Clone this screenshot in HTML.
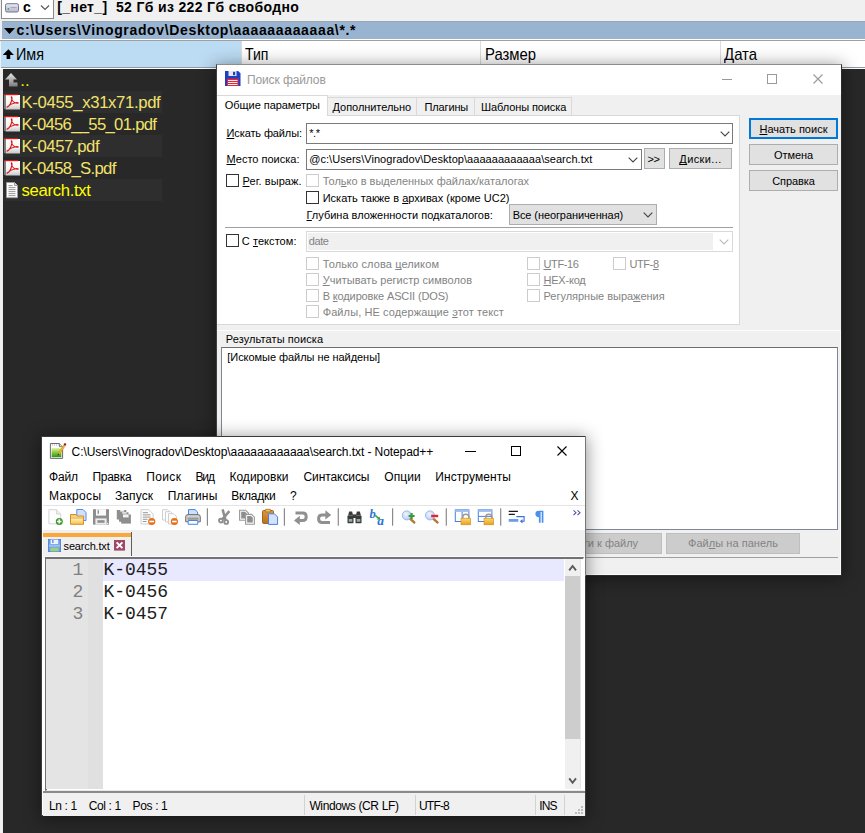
<!DOCTYPE html>
<html><head><meta charset="utf-8">
<style>
*{box-sizing:border-box;margin:0;padding:0}
html,body{width:865px;height:833px;overflow:hidden;background:#282828;font-family:"Liberation Sans","DejaVu Sans",sans-serif;}
.a{position:absolute;white-space:nowrap}
u{text-decoration:underline;text-underline-offset:1px;text-decoration-skip-ink:none}
/* Total Commander */
#tc-top{left:0;top:0;width:865px;height:69px;background:#f0f0f0}
#tc-path{left:1.5px;top:21px;width:864px;height:18px;background:#99b4d1;border-top:1px solid #9aa6b4}
#tc-head{left:0;top:39px;width:865px;height:30px;background:#fff;border-top:1px solid #fff}
.hd{top:41px;height:26px;background:#fff;font-size:17px;line-height:26px;color:#000;transform-origin:0 0}
.f{left:21px;font-size:16.7px;line-height:24px;color:#f2e26c;height:22px}
.row{left:3px;width:159px;height:22px;background:#2e2e2e}
/* dialog */
#dlg{left:216px;top:64px;width:626px;height:512px;background:#f0f0f0;border:1px solid #2c2c2c;border-top-color:#8c8c8c;border-left-color:#404040;box-shadow:0 2px 16px 1px rgba(0,0,0,.42)}
.t{font-size:11px;line-height:13px;color:#000}
.g{color:#838383}
.cb{width:13px;height:13px;border:1px solid #333;background:#fff}
.cb.d{border-color:#cccccc}
.btn{background:#e1e1e1;border:1px solid #adadad;font-size:11px;line-height:18px;text-align:center;color:#000}
.combo{background:#fff;border:1px solid #7a7a7a;height:21px}
/* npp */
#npp{left:41px;top:436px;width:545px;height:380px;background:#fff;border:1px solid #3a3a3a;box-shadow:0 2px 16px 1px rgba(0,0,0,.42)}
.m{font-size:12px;line-height:16px;color:#000}
.mono{font-family:"Liberation Mono","DejaVu Sans Mono",monospace;font-size:18px;line-height:22px;color:#1c1c1c}
.st{font-size:12px;line-height:16px;color:#000;top:798px}
</style></head><body>

<!-- ===== Total Commander background ===== -->
<div class="a" id="tc-top"></div>
<div class="a" style="left:1px;top:0;width:53px;height:19px;background:#fff;border:1px solid #8a8a8a;border-top:none"></div>
<svg class="a" style="left:5px;top:2.6px" width="14" height="10"><defs><linearGradient id="dg" x1="0" y1="0" x2="0" y2="1"><stop offset="0" stop-color="#e8e8f2"/><stop offset="1" stop-color="#b8b8cc"/></linearGradient></defs><rect x="0.5" y="0.7" width="13" height="8.3" rx="1.6" fill="url(#dg)" stroke="#74749a"/><rect x="2.6" y="5.2" width="1.5" height="1.5" fill="#18b030"/><path d="M5.4 4.6 H11.6" stroke="#9898b0" stroke-width="0.8"/></svg>
<div class="a" style="left:23px;top:-1px;font-size:14px;font-weight:bold;line-height:17px;color:#000">c</div>
<svg class="a" style="left:40px;top:4px" width="10" height="8"><path d="M1 1.5 L5 5.5 L9 1.5" fill="none" stroke="#555" stroke-width="1.1"/></svg>
<div class="a" style="left:57.2px;top:-1px;font-size:14px;font-weight:bold;line-height:17px;color:#000;letter-spacing:0.35px">[_нет_]&nbsp; 52 Гб из 222 Гб свободно</div>

<div class="a" id="tc-path"></div>
<svg class="a" style="left:4px;top:27px" width="12" height="8"><path d="M0 1 H11 L5.5 7 Z" fill="#000"/></svg>
<div class="a" style="left:16.5px;top:21px;font-size:14px;font-weight:bold;line-height:19px;color:#000;letter-spacing:0.65px">c:\Users\Vinogradov\Desktop\aaaaaaaaaaaa\*.*</div>

<div class="a" id="tc-head"></div>
<div class="a" style="left:0;top:40px;width:865px;height:1px;background:#a0a0a0"></div>
<div class="a" style="left:0;top:67px;width:865px;height:1px;background:#8f9aa5"></div>
<div class="a" style="left:0;top:41px;width:1px;height:27px;background:#f0f0f0"></div>
<div class="a hd" style="left:1px;width:239.5px;background:#bcdcf4"></div>
<div class="a hd" style="left:241px;width:239px"></div>
<div class="a hd" style="left:481px;width:239px"></div>
<div class="a hd" style="left:721px;width:144px"></div>
<div class="a" style="left:240.5px;top:41px;width:1px;height:26px;background:#dcdcdc"></div>
<div class="a" style="left:480px;top:41px;width:1px;height:26px;background:#dcdcdc"></div>
<div class="a" style="left:720px;top:41px;width:1px;height:26px;background:#dcdcdc"></div>
<svg class="a" style="left:3px;top:48px" width="12" height="12"><path d="M5.4 1.2 L10.9 6.9 H7.2 V10.9 H3.6 V6.9 H-0.1 Z" fill="#000"/></svg>
<div class="a hd" style="left:16px;top:42px;background:none;transform:scaleX(0.846)">Имя</div>
<div class="a hd" style="left:244.5px;top:42px;background:none;transform:scaleX(0.829)">Тип</div>
<div class="a hd" style="left:484.5px;top:42px;background:none;transform:scaleX(0.875)">Размер</div>
<div class="a hd" style="left:723.8px;top:42px;background:none;transform:scaleX(0.88)">Дата</div>

<div class="a" style="left:0;top:69px;width:2px;height:764px;background:#f0f0f0"></div>
<div class="a" style="left:2px;top:69px;width:1.2px;height:764px;background:#ececec"></div>

<div class="a row" style="top:91px"></div>
<div class="a row" style="top:135px"></div>
<div class="a row" style="top:179px"></div>

<svg class="a" style="left:0;top:0" width="0" height="0"><defs><linearGradient id="pg" x1="0" y1="0" x2="0" y2="1"><stop offset="0" stop-color="#ffffff"/><stop offset="0.6" stop-color="#f4f4f4"/><stop offset="1" stop-color="#c8c8c8"/></linearGradient><linearGradient id="ug" x1="0" y1="0" x2="0" y2="1"><stop offset="0" stop-color="#e4e4e4"/><stop offset="1" stop-color="#7c7c7c"/></linearGradient></defs></svg>
<svg class="a" style="left:4px;top:72px" width="15" height="16"><path d="M7 1 L13 7.5 H9.5 V10.5 H13.5 V14.5 H5 V7.5 H1 Z" fill="url(#ug)"/></svg>
<svg class="a" style="left:4px;top:94px" width="17" height="16"><rect x="1.5" y="1" width="14.5" height="14.5" fill="url(#pg)"/><rect x="0" y="0.5" width="1.6" height="14.5" fill="#7a7a7a"/><rect x="0.3" y="0" width="13.7" height="1.2" fill="#e81010"/><path d="M3 13.2 C5.5 12.5 7.2 8.5 7.9 5.2 C8.3 3 7.2 2 7.4 3.6 C7.8 6.5 10 9.6 13.8 9.2 C15 9 13.5 8.2 11.5 8.7 C8.5 9.3 5.5 10.5 3 13.2 Z" fill="none" stroke="#d81818" stroke-width="1.15" stroke-linejoin="round"/></svg>
<svg class="a" style="left:4px;top:116px" width="17" height="16"><rect x="1.5" y="1" width="14.5" height="14.5" fill="url(#pg)"/><rect x="0" y="0.5" width="1.6" height="14.5" fill="#7a7a7a"/><rect x="0.3" y="0" width="13.7" height="1.2" fill="#e81010"/><path d="M3 13.2 C5.5 12.5 7.2 8.5 7.9 5.2 C8.3 3 7.2 2 7.4 3.6 C7.8 6.5 10 9.6 13.8 9.2 C15 9 13.5 8.2 11.5 8.7 C8.5 9.3 5.5 10.5 3 13.2 Z" fill="none" stroke="#d81818" stroke-width="1.15" stroke-linejoin="round"/></svg>
<svg class="a" style="left:4px;top:138px" width="17" height="16"><rect x="1.5" y="1" width="14.5" height="14.5" fill="url(#pg)"/><rect x="0" y="0.5" width="1.6" height="14.5" fill="#7a7a7a"/><rect x="0.3" y="0" width="13.7" height="1.2" fill="#e81010"/><path d="M3 13.2 C5.5 12.5 7.2 8.5 7.9 5.2 C8.3 3 7.2 2 7.4 3.6 C7.8 6.5 10 9.6 13.8 9.2 C15 9 13.5 8.2 11.5 8.7 C8.5 9.3 5.5 10.5 3 13.2 Z" fill="none" stroke="#d81818" stroke-width="1.15" stroke-linejoin="round"/></svg>
<svg class="a" style="left:4px;top:160px" width="17" height="16"><rect x="1.5" y="1" width="14.5" height="14.5" fill="url(#pg)"/><rect x="0" y="0.5" width="1.6" height="14.5" fill="#7a7a7a"/><rect x="0.3" y="0" width="13.7" height="1.2" fill="#e81010"/><path d="M3 13.2 C5.5 12.5 7.2 8.5 7.9 5.2 C8.3 3 7.2 2 7.4 3.6 C7.8 6.5 10 9.6 13.8 9.2 C15 9 13.5 8.2 11.5 8.7 C8.5 9.3 5.5 10.5 3 13.2 Z" fill="none" stroke="#d81818" stroke-width="1.15" stroke-linejoin="round"/></svg>
<svg class="a" style="left:6px;top:182px" width="12" height="17"><path d="M0.5 0.5 H8.5 L11.5 3.5 V15.7 H0.5 Z" fill="#fdfdfd" stroke="#9a9a9a"/><path d="M8.5 0.5 V3.5 H11.5" fill="#e0e0e0" stroke="#9a9a9a"/><path d="M2.5 3.6 H6.6 M2.5 5.6 H9.5 M2.5 7.6 H9.5 M2.5 9.6 H9.5 M2.5 11.6 H9.5 M2.5 13.6 H9.5" stroke="#8c8c8c" stroke-width="0.9"/></svg>
<div class="a f" style="left:20.3px;top:68.6px;color:#e8f400;letter-spacing:0px">..</div>
<div class="a f" style="left:21.6px;top:91px;letter-spacing:-0.35px">K-0455_x31x71.pdf</div>
<div class="a f" style="left:21.6px;top:113px;letter-spacing:-0.7px">K-0456__55_01.pdf</div>
<div class="a f" style="left:21.6px;top:135px;letter-spacing:-0.4px">K-0457.pdf</div>
<div class="a f" style="left:21.6px;top:157px;letter-spacing:-0.67px">K-0458_S.pdf</div>
<div class="a f" style="left:21.6px;top:179px;color:#ffff00;letter-spacing:-0.33px">search.txt</div>

<!-- ===== Find files dialog ===== -->
<div class="a" id="dlg"></div>
<div class="a" style="left:217px;top:65px;width:624px;height:30px;background:#fff"></div>
<svg class="a" style="left:225px;top:71px" width="16" height="15"><path d="M0 0 H13 L15.5 2.2 V15 H0 Z" fill="#1c3fc4"/><rect x="3.5" y="0" width="8" height="5" fill="#e8e8ee"/><rect x="8" y="0.8" width="2.2" height="3.4" fill="#1c3fc4"/><rect x="2" y="7.5" width="11.5" height="7.5" fill="#e02838"/><path d="M3 9.5 H12.5 M3 11.5 H12.5 M3 13.5 H12.5" stroke="#fff" stroke-width="0.9"/></svg>
<svg class="a" style="left:722px;top:74px" width="102" height="11"><path d="M0 5.5 H10" stroke="#999" stroke-width="1"/><rect x="45.5" y="0.5" width="9" height="9" fill="none" stroke="#999"/><path d="M91.5 0.5 L100.5 9.5 M100.5 0.5 L91.5 9.5" stroke="#999" stroke-width="1.1"/></svg>
<div class="a" style="left:246.9px;top:72px;font-size:12px;line-height:16px;color:#9a9a9a;letter-spacing:-0.1px">Поиск файлов</div>

<!-- tab page -->
<div class="a" style="left:217px;top:115px;width:523px;height:209.6px;background:#fff;border:1px solid #d9d9d9;border-left:none"></div>
<div class="a" style="left:217px;top:95px;width:111px;height:21px;background:#fff;border:1px solid #d9d9d9;border-bottom:none;border-left:none"></div>
<div class="a" style="left:327px;top:97px;width:244.5px;height:18px;background:#f0f0f0;border:1px solid #d9d9d9;border-bottom:none"></div>
<div class="a" style="left:416px;top:97px;width:1px;height:18px;background:#d9d9d9"></div>
<div class="a" style="left:474px;top:97px;width:1px;height:18px;background:#d9d9d9"></div>
<div class="a t" style="left:224.8px;top:99px;letter-spacing:-0.05px">Общие параметры</div>
<div class="a t" style="left:332.6px;top:101px;letter-spacing:-0.06px">Дополнительно</div>
<div class="a t" style="left:424.6px;top:101px;letter-spacing:-0.15px">Плагины</div>
<div class="a t" style="left:481px;top:101px;letter-spacing:-0.1px">Шаблоны поиска</div>

<div class="a t" style="left:226.5px;top:127px;letter-spacing:-0.11px"><u>И</u>скать файлы:</div>
<div class="a combo" style="left:306px;top:123px;width:427px"></div>
<div class="a t" style="left:309.2px;top:127px;letter-spacing:-0.41px">*.*</div>
<svg class="a" style="left:719.5px;top:131px" width="10" height="6"><path d="M0.7 0.7 L5 5 L9.3 0.7" fill="none" stroke="#444" stroke-width="1.1"/></svg>
<div class="a t" style="left:226.5px;top:153px"><u>М</u>есто поиска:</div>
<div class="a combo" style="left:306px;top:149px;width:336px"></div>
<div class="a t" style="left:309.2px;top:153px;letter-spacing:0.05px">@c:\Users\Vinogradov\Desktop\aaaaaaaaaaaa\search.txt</div>
<svg class="a" style="left:628px;top:157px" width="10" height="6"><path d="M0.7 0.7 L5 5 L9.3 0.7" fill="none" stroke="#444" stroke-width="1.1"/></svg>
<div class="a btn" style="left:644px;top:148px;width:21px;height:21px;line-height:20.5px;text-align:left;padding-left:2.6px;letter-spacing:-0.5px">&gt;&gt;</div>
<div class="a btn" style="left:669px;top:148px;width:63px;height:21px;line-height:20px;letter-spacing:0.39px"><u>Д</u>иски...</div>

<div class="a cb" style="left:226px;top:174px"></div>
<div class="a t" style="left:242.6px;top:175px;letter-spacing:0.08px"><u>Р</u>ег. выраж.</div>
<div class="a cb d" style="left:306px;top:174px"></div>
<div class="a t g" style="left:322.7px;top:175px">Тол<u>ь</u>ко в выделенных файлах/каталогах</div>
<div class="a cb" style="left:306px;top:191px"></div>
<div class="a t" style="left:322.7px;top:192px">Искать также в <u>а</u>рхивах (кроме UC2)</div>
<div class="a t" style="left:306.5px;top:209px"><u>Г</u>лубина вложенности подкаталогов:</div>
<div class="a btn" style="left:509px;top:204px;width:147.5px;height:21px;line-height:20px;text-align:left;padding-left:2.7px;letter-spacing:-0.09px">Все (неограниченная)</div>
<svg class="a" style="left:643.3px;top:212px" width="10" height="6"><path d="M0.7 0.7 L5 5 L9.3 0.7" fill="none" stroke="#444" stroke-width="1.1"/></svg>
<div class="a" style="left:225px;top:227px;width:508px;height:1px;background:#a0a0a0"></div>

<div class="a cb" style="left:226px;top:234px"></div>
<div class="a t" style="left:241.8px;top:235px;letter-spacing:0.06px">С <u>т</u>екстом:</div>
<div class="a combo" style="left:306px;top:231px;width:427px;border-color:#d9d9d9"></div>
<div class="a" style="left:308px;top:233px;width:405px;height:17px;background:#f0f0f0"></div>
<div class="a t g" style="left:308.7px;top:235px;letter-spacing:-0.37px">date</div>

<svg class="a" style="left:719px;top:239px" width="10" height="6"><path d="M0.7 0.7 L5 5 L9.3 0.7" fill="none" stroke="#bbb" stroke-width="1.1"/></svg>
<div class="a cb d" style="left:306px;top:257px"></div>
<div class="a t g" style="left:322.7px;top:258px;letter-spacing:0.11px">Только слова <u>ц</u>еликом</div>
<div class="a cb d" style="left:306px;top:273px"></div>
<div class="a t g" style="left:322.7px;top:274px;letter-spacing:0.03px"><u>У</u>читывать регистр символов</div>
<div class="a cb d" style="left:306px;top:289px"></div>
<div class="a t g" style="left:322.7px;top:290px;letter-spacing:-0.14px">В <u>к</u>одировке ASCII (DOS)</div>
<div class="a cb d" style="left:306px;top:305px"></div>
<div class="a t g" style="left:322.7px;top:306px;letter-spacing:0.1px">Файлы, НЕ содержащие <u>э</u>тот текст</div>

<div class="a cb d" style="left:527px;top:257px"></div>
<div class="a t g" style="left:543.5px;top:258px;letter-spacing:-0.38px"><u>U</u>TF-16</div>
<div class="a cb d" style="left:613px;top:257px"></div>
<div class="a t g" style="left:629.5px;top:258px;letter-spacing:-0.42px">UTF-<u>8</u></div>
<div class="a cb d" style="left:527px;top:273px"></div>
<div class="a t g" style="left:543.5px;top:274px;letter-spacing:-0.22px"><u>H</u>EX-код</div>
<div class="a cb d" style="left:527px;top:289px"></div>
<div class="a t g" style="left:543.5px;top:290px;letter-spacing:-0.02px">Регулярные выра<u>ж</u>ения</div>

<div class="a btn" style="left:749px;top:118px;width:89px;height:21px;border:2px solid #0078d7;line-height:18px;letter-spacing:0.02px"><u>Н</u>ачать поиск</div>
<div class="a btn" style="left:749px;top:144px;width:89px;height:21px;line-height:20px;letter-spacing:-0.11px">Отмена</div>
<div class="a btn" style="left:749px;top:170px;width:89px;height:21px;line-height:20px;letter-spacing:-0.06px">Справка</div>

<div class="a t" style="left:225.8px;top:333px;letter-spacing:0.09px">Результаты поиска</div>
<div class="a" style="left:217px;top:330px;width:624px;height:1px;background:#fcfcfc"></div>
<div class="a" style="left:839.5px;top:330px;width:1.5px;height:245px;background:#fcfcfc"></div>
<div class="a" style="left:217px;top:573.5px;width:624px;height:1.5px;background:#fcfcfc"></div>
<div class="a" style="left:221px;top:347px;width:617px;height:183px;background:#fff;border:1px solid #7e8698;border-top-color:#6e6e6e"></div>
<div class="a t" style="left:227.3px;top:351px;letter-spacing:-0.05px">[Искомые файлы не найдены]</div>
<div class="a btn g" style="left:527px;top:533px;width:134.5px;height:20.5px;background:#cccccc;border-color:#bfbfbf;color:#838383;line-height:19px">Перейти к файлу</div>
<div class="a btn g" style="left:666px;top:533px;width:134px;height:20.5px;background:#cccccc;border-color:#bfbfbf;color:#838383;line-height:19px;letter-spacing:0.04px">Фай<u>л</u>ы на панель</div>
<div class="a" style="left:218px;top:557px;width:620px;height:1px;background:#a0a0a0"></div>

<!-- ===== Notepad++ ===== -->
<div class="a" id="npp"></div>
<div class="a" style="left:71.6px;top:444px;font-size:12px;line-height:16px;color:#000;letter-spacing:-0.08px">C:\Users\Vinogradov\Desktop\aaaaaaaaaaaa\search.txt - Notepad++</div>
<div class="a" style="left:585px;top:436px;width:1px;height:140px;background:#767676"></div>
<svg class="a" style="left:49px;top:442px" width="18" height="18"><defs><linearGradient id="ng" x1="0" y1="0" x2="0" y2="1"><stop offset="0" stop-color="#e4f2b0"/><stop offset="0.45" stop-color="#8ccc40"/><stop offset="1" stop-color="#2c9418"/></linearGradient></defs><path d="M1.4 1.5 H10.4 L13.6 4.7 V16.4 H1.4 Z" fill="#fff" stroke="#5a5a5a" stroke-width="0.9"/><path d="M10.4 1.5 V4.7 H13.6" fill="#e8e8e8" stroke="#5a5a5a" stroke-width="0.8"/><path d="M3 3 H9.6" stroke="#aaa" stroke-width="1" stroke-dasharray="1 1"/><rect x="2.6" y="6" width="9.8" height="9.2" fill="url(#ng)"/><path d="M15 2.6 L16.4 3.6 L10.4 12.6 L9 11.6 Z" fill="#f4b820" stroke="#c88410" stroke-width="0.5"/><path d="M9 11.6 L10.4 12.6 L8.6 13.8 Z" fill="#403020"/><ellipse cx="16" cy="2.4" rx="1.3" ry="1.1" fill="#a01428"/></svg>
<svg class="a" style="left:465px;top:445px" width="104" height="12"><path d="M0 6.5 H11" stroke="#000" stroke-width="1"/><rect x="46.5" y="1.5" width="9" height="9" fill="none" stroke="#000"/><path d="M92.5 1.5 L101.5 10.5 M101.5 1.5 L92.5 10.5" stroke="#000" stroke-width="1.1"/></svg>
<div class="a m" style="left:49px;top:469px;letter-spacing:-0.2px">Файл</div>
<div class="a m" style="left:92.4px;top:469px;letter-spacing:-0.27px">Правка</div>
<div class="a m" style="left:146.2px;top:469px;letter-spacing:0.36px">Поиск</div>
<div class="a m" style="left:195.5px;top:469px;letter-spacing:-1.16px">Вид</div>
<div class="a m" style="left:229.4px;top:469px;letter-spacing:0.03px">Кодировки</div>
<div class="a m" style="left:303.5px;top:469px;letter-spacing:-0.09px">Синтаксисы</div>
<div class="a m" style="left:384.3px;top:469px;letter-spacing:0.07px">Опции</div>
<div class="a m" style="left:435.3px;top:469px;letter-spacing:0.08px">Инструменты</div>
<div class="a m" style="left:49px;top:488px;letter-spacing:0.33px">Макросы</div>
<div class="a m" style="left:115px;top:488px;letter-spacing:0.09px">Запуск</div>
<div class="a m" style="left:167.7px;top:488px;letter-spacing:0.16px">Плагины</div>
<div class="a m" style="left:231.2px;top:488px;letter-spacing:-0.27px">Вкладки</div>
<div class="a m" style="left:290px;top:488px">?</div>
<div class="a m" style="left:570.5px;top:488px">X</div>

<div class="a" style="left:43px;top:505px;width:542px;height:1px;background:#e4e4e4"></div>
<svg class="a" style="left:43px;top:506px" width="542" height="24">
<defs><linearGradient id="fo" x1="0" y1="0" x2="0" y2="1"><stop offset="0" stop-color="#f9c468"/><stop offset="0.5" stop-color="#fdeaa8"/><stop offset="1" stop-color="#f6c050"/></linearGradient>
<linearGradient id="lk" x1="0" y1="0" x2="0" y2="1"><stop offset="0" stop-color="#fbd870"/><stop offset="1" stop-color="#e8a020"/></linearGradient>
<linearGradient id="cb" x1="0" y1="0" x2="0" y2="1"><stop offset="0" stop-color="#d89848"/><stop offset="1" stop-color="#b87020"/></linearGradient>
<radialGradient id="mg" cx="0.4" cy="0.35" r="0.7"><stop offset="0" stop-color="#eef4ff"/><stop offset="1" stop-color="#b4cdf4"/></radialGradient></defs>
<g transform="translate(5.4,3.2)"><path d="M0.5 0.5 H8 L12.3 4.8 V14.6 H0.5 Z" fill="#fdfdfd" stroke="#d4d4d4"/><path d="M8 0.5 V4.8 H12.3" fill="#eee" stroke="#d4d4d4"/><circle cx="10.9" cy="12.2" r="3.5" fill="#3e9a2e"/><path d="M10.9 10 V14.4 M8.7 12.2 H13.1" stroke="#fff" stroke-width="1.5"/></g>
<g transform="translate(27,3)"><path d="M6.8 0.5 H13 L16 3.5 V11.5 H6.8 Z" fill="#cfe0fb" stroke="#5a8ce4"/><path d="M0.5 5.5 H6 L7.2 7 H13.5 V15.3 H0.5 Z" fill="url(#fo)" stroke="#dc8c24"/><path d="M0.8 9 H13.2" stroke="#e8a23a" stroke-width="0.8"/></g>
<g transform="translate(50,3.2)"><path d="M0 0 H16 V15.4 H0 Z" fill="#8e8e8e"/><rect x="3" y="0" width="10" height="6.4" fill="#fafafa"/><rect x="4.6" y="1" width="1.4" height="3.6" fill="#8e8e8e"/><rect x="2.4" y="9.2" width="11.2" height="6.2" fill="#ededed"/><rect x="4.4" y="11" width="7.2" height="2.6" fill="#8e8e8e"/><rect x="14" y="13.6" width="1.2" height="1.2" fill="#f0f0f0"/></g>
<g transform="translate(73.8,4)" fill="#8e8e8e"><path d="M0 0 H9.5 V3 H3 V9.6 H0 Z"/><path d="M2.2 2.2 H11.7 V5.2 H5.2 V11.8 H2.2 Z"/><rect x="4.4" y="4.4" width="9.7" height="9.2"/><rect x="6.2" y="4.4" width="5.6" height="3" fill="#f4f4f4"/><rect x="3.4" y="0" width="4" height="1.6" fill="#f4f4f4"/><rect x="5.4" y="2.2" width="4.4" height="1.4" fill="#f4f4f4"/></g>
<g transform="translate(97.5,3.2)"><path d="M0.5 0.5 H8.4 L12.6 4.7 V14.8 H0.5 Z" fill="#fdfdfd" stroke="#cfcfcf"/><path d="M2.3 3.5 H7.5 M2.3 5.7 H10 M2.3 7.9 H10 M2.3 10.1 H7 M2.3 12.3 H6" stroke="#8c8c8c" stroke-width="0.9"/><circle cx="11.2" cy="12.3" r="3.6" fill="#e8701c"/><rect x="8.9" y="11.5" width="4.6" height="1.6" fill="#fff"/></g>
<g transform="translate(119,3.2)"><path d="M0.5 0.5 H5.4 L8 3 V10.8 H0.5 Z" fill="#fdfdfd" stroke="#cfcfcf"/><path d="M3.5 2.5 H8.4 L11 5 V12.8 H3.5 Z" fill="#fdfdfd" stroke="#cfcfcf"/><path d="M6.5 4.5 H11.4 L14.5 7.4 V14.8 H6.5 Z" fill="#fdfdfd" stroke="#cfcfcf"/><circle cx="12.4" cy="12.3" r="3.6" fill="#e8701c"/><rect x="10.1" y="11.5" width="4.6" height="1.6" fill="#fff"/></g>
<g transform="translate(142,3)"><path d="M3.5 0.6 H10 L12.6 3 V7 H3.5 Z" fill="#cfe0fb" stroke="#4a86e0"/><path d="M0.7 7.8 Q0.7 5.6 3 5.6 H13 Q15.3 5.6 15.3 7.8 V12.8 H0.7 Z" fill="#d0d0d0" stroke="#6e6e6e"/><rect x="2.6" y="8.6" width="10.8" height="2.2" fill="#9a9a9a"/><path d="M3.2 11.5 H12.8 V15.3 H3.2 Z" fill="#f8fbff" stroke="#4a86e0"/></g>
<rect x="163.8" y="2.3" width="1.2" height="17.4" fill="#8a8a8a"/>
<g transform="translate(175,3)" fill="none" stroke="#8e8e8e"><path d="M4.6 0.4 L7.6 11.4" stroke-width="2.5"/><path d="M11.4 2.2 L4 10.6" stroke-width="2.5"/><circle cx="2.9" cy="11.6" r="1.9" stroke-width="1.9"/><circle cx="8.2" cy="13" r="1.9" stroke-width="1.9"/></g>
<g transform="translate(196,3.6)"><path d="M0.6 0.6 H6.6 L9.4 3.4 V10.6 H0.6 Z" fill="#fafafa" stroke="#9a9a9a" stroke-width="1.1"/><path d="M2.2 2.2 H6 L7.8 4 V9 H2.2 Z" fill="#8e8e8e"/><path d="M6.6 4.8 H12.6 L15.4 7.6 V14.6 H6.6 Z" fill="#fafafa" stroke="#9a9a9a" stroke-width="1.1"/><path d="M8.2 6.4 H12 L13.8 8.2 V13 H8.2 Z" fill="#8e8e8e"/></g>
<g transform="translate(219,3)"><rect x="0.5" y="1.5" width="11" height="13" rx="1.2" fill="url(#cb)" stroke="#a86418"/><rect x="3.3" y="0.3" width="5.4" height="2.6" rx="0.6" fill="#f0c060" stroke="#a86418" stroke-width="0.7"/><path d="M6.5 4.8 H12.4 L15.6 8 V15.4 H6.5 Z" fill="#d4e2fc" stroke="#4a80dc"/></g>
<rect x="240.8" y="2.3" width="1.2" height="17.4" fill="#8a8a8a"/>
<g transform="translate(251,4.8)"><path d="M1.5 2.2 H8.8 Q12.2 2.2 12.2 6 Q12.2 9.7 8.8 9.7 H5" fill="none" stroke="#909090" stroke-width="3"/><path d="M0 9.7 L5.8 5 V14.2 Z" fill="#909090"/></g>
<g transform="translate(274,4)"><path d="M9 4.9 H5.2 Q1.6 4.9 1.6 8.7 Q1.6 12.5 5.2 12.5 H13" fill="none" stroke="#909090" stroke-width="3"/><path d="M14.2 4.9 L8.4 0.2 V9.4 Z" fill="#909090"/></g>
<rect x="294.7" y="2.3" width="1.2" height="17.4" fill="#8a8a8a"/>
<g transform="translate(304.5,5)" fill="#3a3a3a"><rect x="0" y="4.6" width="6" height="7.6" rx="0.6"/><rect x="8" y="4.6" width="6" height="7.6" rx="0.6"/><path d="M1.6 0.4 H4.6 L5.6 4.6 H0.6 Z"/><path d="M9.4 0.4 H12.4 L13.4 4.6 H8.4 Z"/><rect x="5.4" y="3.4" width="3.2" height="3.6"/><rect x="1.2" y="8" width="3.6" height="2.8" fill="#9aa"/><rect x="9.2" y="8" width="3.6" height="2.8" fill="#9aa"/></g>
<g transform="translate(327,3)"><text x="-0.5" y="8.6" font-family="Liberation Serif,serif" font-weight="bold" font-style="italic" font-size="12.5" fill="#2e72dc">b</text><text x="7.2" y="15.6" font-family="Liberation Serif,serif" font-weight="bold" font-style="italic" font-size="13.5" fill="#2e72dc">a</text><path d="M5.2 6.4 L9 9.6" stroke="#3aa048" stroke-width="1.5"/><path d="M10.6 10.8 L6.8 10.4 L9.4 7.6 Z" fill="#3aa048"/></g>
<rect x="349.0" y="2.3" width="1.2" height="17.4" fill="#8a8a8a"/>
<g transform="translate(358.8,4.4)"><path d="M8.2 8.2 L12.4 12" stroke="#b87838" stroke-width="2.6" stroke-linecap="round"/><circle cx="5" cy="5" r="4.5" fill="url(#mg)" stroke="#9ab8ec"/><path d="M9.8 2.6 V8.6 M6.8 5.6 H12.8" stroke="#3c9a34" stroke-width="2.2"/></g>
<g transform="translate(382,4.4)"><path d="M8.2 8.2 L12.4 12" stroke="#b87838" stroke-width="2.6" stroke-linecap="round"/><circle cx="5" cy="5" r="4.5" fill="url(#mg)" stroke="#9ab8ec"/><rect x="6.2" y="4.4" width="7" height="2.4" fill="#e82030"/></g>
<rect x="402.7" y="2.3" width="1.2" height="17.4" fill="#8a8a8a"/>
<g transform="translate(411.8,3.4)"><rect x="0.5" y="0.5" width="13.6" height="11.6" fill="#fff" stroke="#4a80dc"/><rect x="0.5" y="0.5" width="13.6" height="2" fill="#9cbcf0"/><path d="M7.3 2.5 V12" stroke="#4a80dc"/><path d="M8 9 V7.4 Q8 4.8 11 4.8 Q14 4.8 14 7.4 V9" fill="none" stroke="#9a9a9a" stroke-width="1.5"/><rect x="6.2" y="8.8" width="9.6" height="6.6" fill="url(#lk)" stroke="#d08a18" stroke-width="0.6"/></g>
<g transform="translate(434.8,3.4)"><rect x="0.5" y="0.5" width="13.6" height="11.6" fill="#fff" stroke="#4a80dc"/><rect x="0.5" y="0.5" width="13.6" height="2" fill="#9cbcf0"/><path d="M0.5 7 H14" stroke="#4a80dc"/><path d="M8 9 V7.4 Q8 4.8 11 4.8 Q14 4.8 14 7.4 V9" fill="none" stroke="#9a9a9a" stroke-width="1.5"/><rect x="6.2" y="8.8" width="9.6" height="6.6" fill="url(#lk)" stroke="#d08a18" stroke-width="0.6"/></g>
<rect x="457.1" y="2.3" width="1.2" height="17.4" fill="#8a8a8a"/>
<g transform="translate(465.7,4.6)"><path d="M0 0.8 H9.2 M0 3.8 H6.2" stroke="#1a1a1a" stroke-width="1.3"/><rect x="0" y="8.4" width="9.6" height="2.8" fill="#6a9cec"/><path d="M7.6 6 H15.4 V10.6 H13" fill="none" stroke="#3a72d8" stroke-width="1.1"/><path d="M11.2 10.6 L13.8 8.4 V12.8 Z" fill="#3a72d8"/></g>
<g transform="translate(492.4,4.8)" fill="#4a90ee"><path d="M3.4 0 H8 V12 H6.3 V1.2 H5.2 V12 H3.5 V6.4 Q0 6.2 0 3.2 Q0 0 3.4 0 Z"/></g>
<path d="M530.5 4.3 L533 6.7 L530.5 9.1 M534.5 4.3 L537 6.7 L534.5 9.1" fill="none" stroke="#5050b0" stroke-width="1.1"/>
</svg>
<div class="a" style="left:43px;top:530px;width:542px;height:28px;background:#f0f0f0"></div>
<div class="a" style="left:43px;top:532px;width:88px;height:25px;background:#f0f0f0"></div>
<div class="a" style="left:130.6px;top:532px;width:1.6px;height:24px;background:#5c5c5c"></div>
<div class="a" style="left:43px;top:532.6px;width:88px;height:4.4px;background:#faa83c"></div>
<svg class="a" style="left:48px;top:539px" width="13" height="13"><rect x="0.4" y="0.4" width="12.2" height="12.2" fill="#6c9eea" stroke="#4a7cd4" stroke-width="0.8"/><rect x="2.6" y="0.6" width="7.6" height="4.4" fill="#eef2fa"/><rect x="4" y="1" width="1.6" height="3" fill="#6c9eea"/><rect x="1" y="5.6" width="11" height="2.2" fill="#9cc0f4"/><rect x="2.4" y="8.6" width="8.2" height="3.8" fill="#9cd080"/></svg>
<div class="a t" style="left:63.6px;top:540px;letter-spacing:-0.17px">search.txt</div>
<svg class="a" style="left:114px;top:540px" width="11" height="11"><rect width="11" height="10.6" fill="#a04868"/><path d="M2.6 2.4 L8.4 8.2 M8.4 2.4 L2.6 8.2" stroke="#fff" stroke-width="1.9"/></svg>

<div class="a" style="left:43px;top:556px;width:542px;height:1px;background:#fafafa"></div>
<div class="a" style="left:44.5px;top:557px;width:539px;height:234.4px;background:#fff;border-top:2px solid #727272;border-left:2px solid #727272;border-right:1px solid #fff;border-bottom:1px solid #e8e8e8"></div>
<div class="a" style="left:46px;top:559px;width:41.5px;height:230px;background:#e4e4e4"></div>
<div class="a" style="left:87.5px;top:559px;width:15.3px;height:230px;background:#e0e0e0"></div>
<div class="a" style="left:102.8px;top:559px;width:461.2px;height:22px;background:#e8e8ff"></div>
<div class="a mono" style="left:72.6px;top:559px;color:#808080">1</div>
<div class="a mono" style="left:72.6px;top:581px;color:#808080">2</div>
<div class="a mono" style="left:72.6px;top:603px;color:#808080">3</div>
<div class="a mono" style="left:103.5px;top:559px;letter-spacing:-0.06px">K-0455</div>
<div class="a mono" style="left:103.5px;top:581px;letter-spacing:-0.06px">K-0456</div>
<div class="a mono" style="left:103.5px;top:603px;letter-spacing:-0.06px">K-0457</div>
<div class="a" style="left:565px;top:559px;width:16px;height:230px;background:#f0f0f0;border-right:1px solid #e6e6e6"></div>
<div class="a" style="left:565px;top:576px;width:15px;height:163px;background:#cdcdcd"></div>
<svg class="a" style="left:568px;top:564px" width="10" height="8"><path d="M1.2 6.4 L4.6 2 L8 6.4" fill="none" stroke="#5a5a5a" stroke-width="1.9"/></svg>
<svg class="a" style="left:568px;top:777px" width="10" height="8"><path d="M1.2 1.4 L4.6 5.8 L8 1.4" fill="none" stroke="#5a5a5a" stroke-width="1.9"/></svg>

<div class="a" style="left:43px;top:791.4px;width:542px;height:1.6px;background:#8a8a8a"></div>
<div class="a" style="left:43px;top:793px;width:542px;height:22.6px;background:#f0f0f0"></div>
<div class="a" style="left:304px;top:795px;width:1px;height:19.5px;background:#d2d2d2"></div>
<div class="a" style="left:414.5px;top:795px;width:1px;height:19.5px;background:#d2d2d2"></div>
<div class="a" style="left:534.5px;top:795px;width:1px;height:19.5px;background:#d2d2d2"></div>
<div class="a" style="left:564.4px;top:795px;width:1px;height:19.5px;background:#d2d2d2"></div>
<svg class="a" style="left:574px;top:805px" width="10" height="10" fill="#bcbcbc"><rect x="7" y="1" width="2" height="2"/><rect x="4" y="4" width="2" height="2"/><rect x="7" y="4" width="2" height="2"/><rect x="1" y="7" width="2" height="2"/><rect x="4" y="7" width="2" height="2"/><rect x="7" y="7" width="2" height="2"/></svg>
<div class="a st" style="left:49px;letter-spacing:-0.37px">Ln : 1&nbsp;&nbsp;&nbsp; Col : 1&nbsp;&nbsp;&nbsp; Pos : 1</div>
<div class="a st" style="left:309.4px;letter-spacing:-0.37px">Windows (CR LF)</div>
<div class="a st" style="left:419px;letter-spacing:-0.8px">UTF-8</div>
<div class="a st" style="left:539.3px;letter-spacing:-0.95px">INS</div>
</body></html>
